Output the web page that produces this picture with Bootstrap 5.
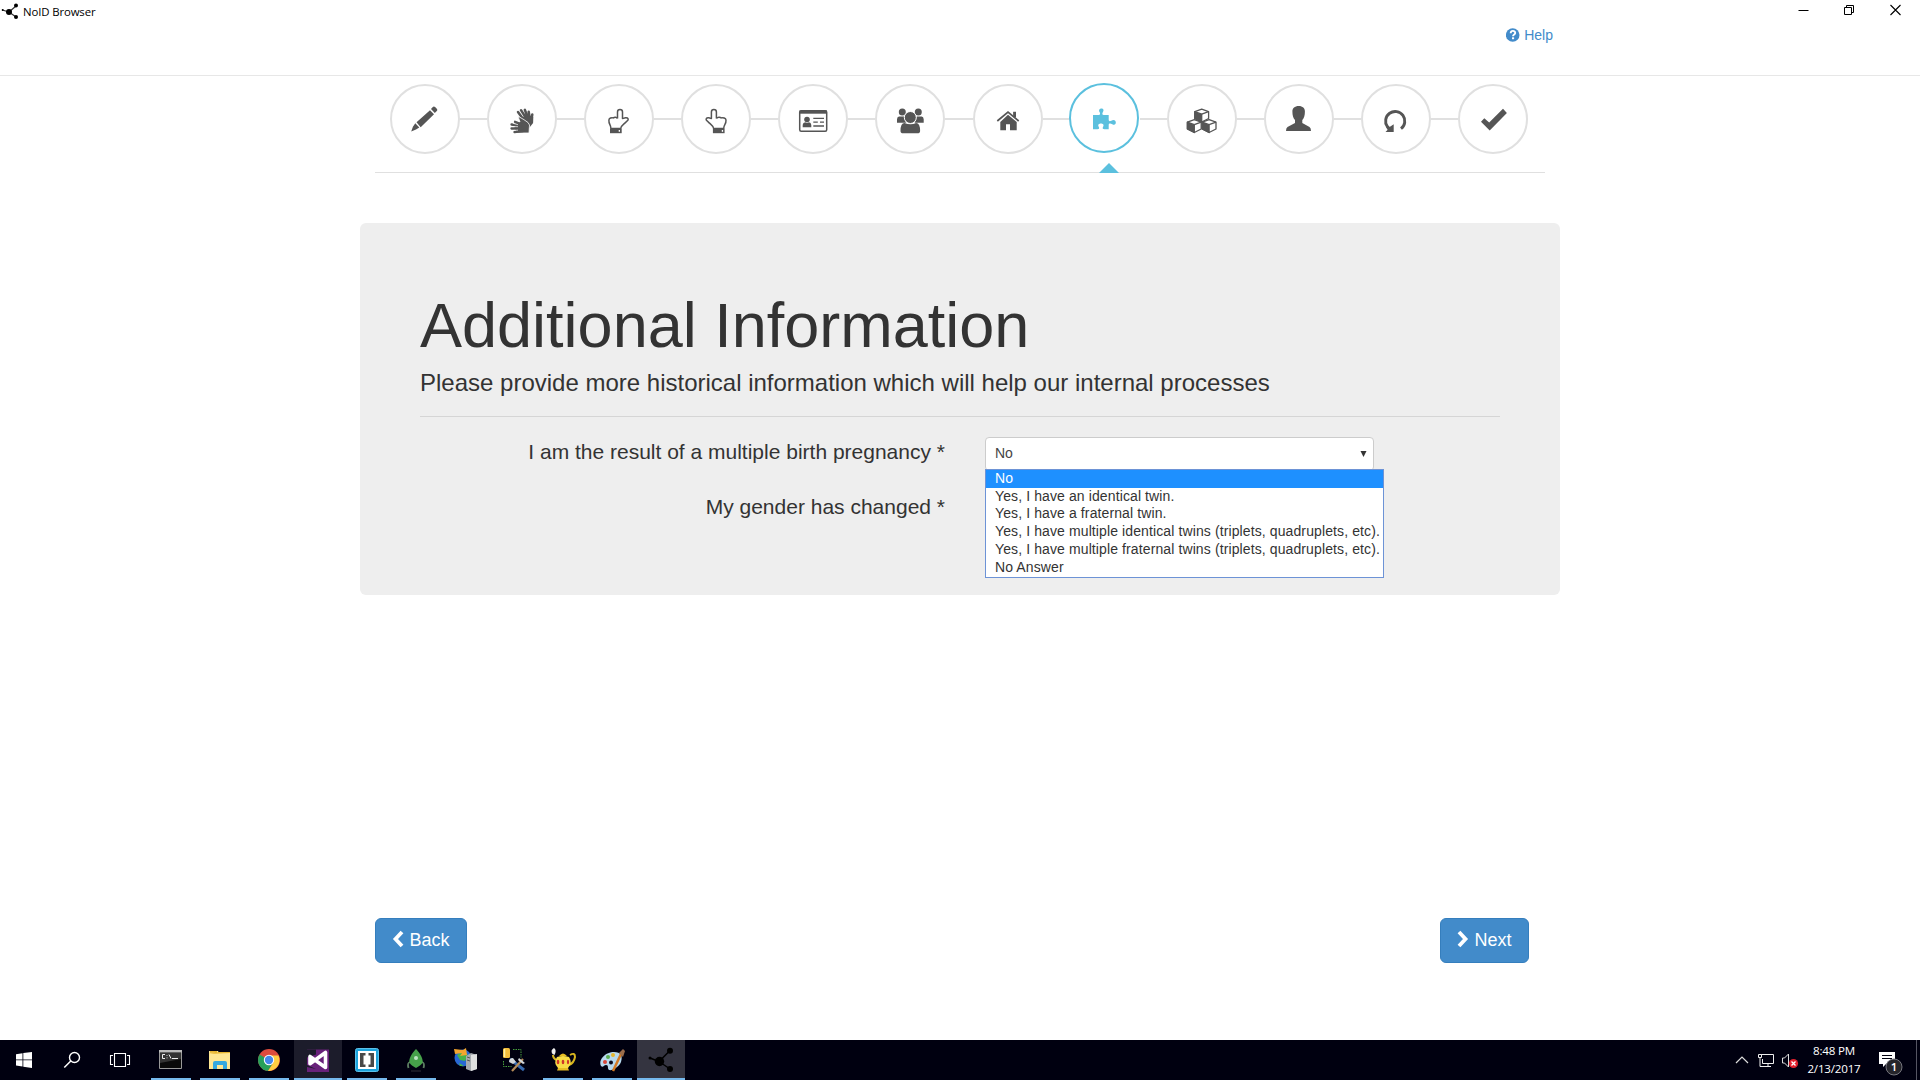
<!DOCTYPE html>
<html lang="en">
<head>
<meta charset="utf-8">
<title>NoID Browser</title>
<link href="https://cdn.jsdelivr.net/npm/bootstrap@5.3.0/dist/css/bootstrap.min.css" rel="stylesheet">
<style>
body{font-family:"Liberation Sans",Arial,sans-serif;font-size:14px;line-height:1.42857;color:#333;background:#fff;overflow:hidden}
svg{display:block;flex:none}
.app-window{height:1040px}
.top-strip{height:76px;border-bottom:1px solid #e7e7e7}
.win-title{font:11.4px/16px "Open Sans","Noto Sans",sans-serif;letter-spacing:-.13px;color:#000;padding:3px 0 0 1px;gap:4px;height:24px}
.win-title span{padding-top:1px}
.win-controls{gap:35px;padding:2px 19px 0 0}
.help-row{padding:2px 367px 0 0}
.help-link{color:#428bca;gap:4px}
.help-link svg{margin-top:-1px}
.wizard{width:1170px;height:97px;padding:8px 17px 0 15px;border-bottom:1px solid #e0e0e0}
.step-ring{width:70px;height:70px;border:2px solid #e0e0e0;border-radius:50%;color:#555;flex:none}
.step-ring.current{border-color:#5bc0de;color:#5bc0de;margin:-1px 1px 1px -1px}
.step-ring svg{fill:currentColor}
.joint{height:2px;background:#e0e0e0;margin-top:34px}
.pointer-tip{left:724px;bottom:-1px;border:10px solid transparent;border-top:0;border-bottom-color:#5bc0de}
.panel-box{width:1200px;height:372px;margin-top:50px;padding:68px 60px 0;background:#eee;border-radius:6px}
.panel-box h1{font-size:63px;line-height:1.1;font-weight:500;margin:0 0 10px;color:#333}
.panel-box h2{font-size:24px;line-height:1.1;font-weight:400;margin:0}
.rule{height:1px;background:#d5d5d5;margin:19px 0 20px}
.q-label{width:525px;font-size:21px;line-height:29px;font-weight:400}
.q-row{height:55px;gap:40px}
.pick{width:389px;height:34px;padding:0 6px 0 9px;background:#fff;border:1px solid #ccc;border-radius:4px;color:#444}
.pick-list{top:32px;left:0;width:399px;height:109px;border:1px solid #6d93d6;background:#fff;color:#333;white-space:nowrap;letter-spacing:.11px;z-index:3}
.pick-list div{height:17.8px;line-height:16px;padding-left:9px}
.pick-list .chosen{background:#1e90ff;color:#fff;height:18px;line-height:16px}
.nav-row{width:1170px;padding:0 16px 77px 0}
.btn-step{--bs-btn-bg:#428bca;--bs-btn-border-color:#357ebd;--bs-btn-color:#fff;height:45px;font-size:18px;line-height:24px;border-radius:6px;padding:9px 0 0;gap:5px}
.taskbar{height:40px;background:#000010;color:#fff;font-family:"Open Sans","Noto Sans",sans-serif}
.task{width:48px;height:40px;margin-right:1px}
.sys{margin-right:0}
.running{background:linear-gradient(#76b9ed,#76b9ed) center bottom/40px 2px no-repeat}
.lit{background:linear-gradient(#76b9ed,#76b9ed) center bottom/48px 2px no-repeat,#1c1c2b}
.lit2{background:linear-gradient(#76b9ed,#76b9ed) center bottom/48px 2px no-repeat,#343440}
.clock{font-size:11.6px;line-height:18px;width:54px;letter-spacing:-.2px;padding-top:2px;white-space:nowrap}
.edge{width:4px;border-left:1px solid #555563;height:40px}
</style>
<script src="https://cdn.jsdelivr.net/npm/bootstrap@5.3.0/dist/js/bootstrap.bundle.min.js"></script>
</head>
<body>
<div class="app-window d-flex flex-column align-items-center">
  <header class="top-strip w-100">
    <div class="d-flex justify-content-between">
      <div class="win-title d-flex">
        <svg width="18" height="17" viewBox="0 0 18 17"><path d="M1.500 7 8 9l7-6M8 9l7 5" stroke="#333" stroke-width="1.200" fill="none"/><circle cx="8" cy="9" r="3"/><circle cx="15" cy="2.500" r="2"/><circle cx="15" cy="14" r="2"/><circle cx="1.700" cy="7" r="1"/></svg>
        <span>NoID Browser</span>
      </div>
      <div class="win-controls d-flex">
        <svg width="11" height="18"><path d="M.5 8.500h10" stroke="#000"/></svg>
        <svg width="11" height="18"><path d="M.5 5.500h7v7h-7zM2.500 5.500v-2h7v7h-2" fill="none" stroke="#000"/></svg>
        <svg width="11" height="18"><path d="M.5 3l10 10M10.500 3l-10 10" stroke="#000" stroke-width="1.100"/></svg>
      </div>
    </div>
    <div class="help-row d-flex justify-content-end">
      <a href="#" class="help-link d-flex align-items-start text-decoration-none">
        <svg width="14" height="20" viewBox="0 0 14 20"><circle cx="6.700" cy="10" r="6.800" fill="#428bca"/><path d="M4.700 8.300c0-3.300 4.600-3 4.500-.3 0 1.600-2.200 1.400-2.200 3.300" fill="none" stroke="#fff" stroke-width="1.900"/><path d="M6 12.300h2.100v1.900H6z" fill="#fff"/></svg>
        <span>Help</span>
      </a>
    </div>
  </header>

  <nav class="wizard d-flex align-items-start position-relative">
    <div class="step-ring"><svg width="66" height="66" viewBox="2 2 66 66"><path d="M26.500 38.300 40 26.300l4 4L30.700 43.300zM25.300 39.300l4 4.200-3.300 2-4.800 2 1.700-4.700zM41 25l1.600-1.800q1.200-1.400 2.500-.2l1.700 1.800q1.200 1.200 0 2.300L44.800 29z"/></svg></div>
    <div class="joint flex-fill"></div>
    <div class="step-ring"><svg width="66" height="66" viewBox="2 2 66 66"><g stroke="currentColor" stroke-width="2.500" stroke-linecap="round" fill="none"><path d="M36 35l-5-7M39 34l-5-7.800M41 34l-3.200-8.200M43 36l-1.300-8.200M44 38l1.300-7.500"/></g><path d="M34 33l9-1 3.300 1-.2 6-4 5-6-4z"/><path d="M31 32.200l6 3.500 4 2.800 1.500 2.500-.5 8H30l-3-5 1-5 5-1z" stroke="#fff" stroke-width=".8"/><path d="M34 40l-6-2.200M34 42l-9.500-1.500M35 44.500l-10.500 0M36 47l-8.500 1" stroke="currentColor" stroke-width="2.300" stroke-linecap="round"/><path d="M25 42.500l6 .2M26 46.500l5-.4M26 39.300l5 1.400" stroke="#fff" stroke-width=".7"/></svg></div>
    <div class="joint flex-fill"></div>
    <div class="step-ring"><svg width="66" height="66" viewBox="2 2 66 66"><path d="M33.500 34.500V28a2.500 2.500 0 0 1 5 0v6.600l3-.8c2.500-.4 3.600 1.800 1.800 3l-2.400 2.300c-1.600 1.800-4.200 2.500-4.200 5.300H26.900c0-3.800-2.300-4-2-8.400.2-2 2.600-2.700 4.500-2.100 1-.8 3-.9 4.100 .6" fill="none" stroke="currentColor" stroke-width="1.500" stroke-linejoin="round"/><path d="M26 44.600h11.700v4.600H26z"/><path d="M34.700 46h1.300v1.800h-1.300z" fill="#fff"/></svg></div>
    <div class="joint flex-fill"></div>
    <div class="step-ring"><svg width="66" height="66" viewBox="2 2 66 66"><g transform="translate(69.600)scale(-1 1)"><path d="M34.200 34.500V28a2.500 2.500 0 0 1 5 0v6.600l2.600-.8c2.500-.4 3.600 1.800 1.800 3l-2.400 2.300c-1.600 1.800-4.200 2.500-4.200 5.300H26.900c0-3.800-2.600-4-2.300-8.400.2-2 2.900-2.700 4.800-2.100 1-.8 3.500-.9 4.800 .6" fill="none" stroke="currentColor" stroke-width="1.500" stroke-linejoin="round"/><path d="M26 44.600h11.700v4.600H26z"/><path d="M27.500 46h1.300v1.800h-1.300z" fill="#fff"/></g></svg></div>
    <div class="joint flex-fill"></div>
    <div class="step-ring"><svg width="66" height="66" viewBox="2 2 66 66"><rect x="21.700" y="26.700" width="27" height="20.600" rx="1.500" fill="none" stroke="currentColor" stroke-width="1.500"/><path d="M21.500 26.500h27.500v3.200H21.500z"/><circle cx="29" cy="35.500" r="2.800"/><path d="M24.700 43.200v-2.500q.3-2.500 2.500-2.500 1.800 1 3.700 0 2.200.2 2.400 2.700v2.300z"/><path d="M35.300 34.300H46M35.300 38.200h4.500M42 38.200h4M35.300 42H46" stroke="currentColor" stroke-width="1.300"/></svg></div>
    <div class="joint flex-fill"></div>
    <div class="step-ring"><svg width="66" height="66" viewBox="2 2 66 66"><circle cx="27.300" cy="28" r="3.500"/><circle cx="43.300" cy="28" r="3.500"/><path d="M22 38.800v-3.500q.2-2.800 2-2.800h5l2 6.300zM48.700 38.800v-3.500q-.2-2.800-2-2.800h-5l-2 6.300z"/><circle cx="35.300" cy="33.500" r="6" stroke="#fff"/><path d="M29.500 39q-4 0-4 8 0 2.300 2.700 2.300h14.200q2.700 0 2.700-2.300 0-8-4-8-5.500 2.500-11.600 0z"/></svg></div>
    <div class="joint flex-fill"></div>
    <div class="step-ring"><svg width="66" height="66" viewBox="2 2 66 66"><path d="M24.300 37 35 28.200 45.700 37M41.500 28v5" fill="none" stroke="currentColor" stroke-width="1.700"/><path d="M40.200 27.800h2.800v6l-2.800-2.300zM35 30.800l8.700 7.200v8.200H37v-6h-4v6h-5.700V38z"/></svg></div>
    <div class="joint flex-fill"></div>
    <div class="step-ring current"><svg width="66" height="66" viewBox="2 2 66 66"><path d="M24 32h6c1 0 1.500-1.500.7-2.700-3-4.900 6.300-5.400 3.200-.3-1 1.700-.6 3 .8 3h5v4.500c0 2 1.300 2 2.600 1.200 5.700-3.200 6 6.300 1 3.600-1.800-1-3.600-1-3.600.7v4.300h-4.200c-2 0-2.200-1-1.400-2.500 2.600-4.500-6.900-4.500-4.400 0 1 1.700.2 2.500-1.200 2.500H24z"/></svg></div>
    <div class="joint flex-fill"></div>
    <div class="step-ring"><svg width="66" height="66" viewBox="2 2 66 66"><g stroke="currentColor" stroke-width="1.300" stroke-linejoin="round"><g id="cube"><path d="M27.800 27.700l6.900-2.500 6.900 2.500v6.800l-6.900 3.500-6.900-3.500z" fill="#fff"/><path d="M27.800 27.700l6.900 2.500V38l-6.900-3.500z"/><path d="M34.700 30.200l6.900-2.500" fill="none"/></g><use href="#cube" x="-7.400" y="10.500"/><use href="#cube" x="7.400" y="10.500"/></g></svg></div>
    <div class="joint flex-fill"></div>
    <div class="step-ring"><svg width="66" height="66" viewBox="2 2 66 66"><path d="M34.700 22c4 0 6.200 2.300 6.200 5.500 0 4-.8 6.500-2.600 8.500v3l7.200 4q1.500 1 1.500 4H22q0-3 1.500-4l7.500-4v-3c-1.800-2-2.600-4.500-2.600-8.500 0-3.200 2.300-5.500 6.300-5.500z"/></svg></div>
    <div class="joint flex-fill"></div>
    <div class="step-ring"><svg width="66" height="66" viewBox="2 2 66 66"><path d="M40 44.700A9.600 9.600 0 1 0 26.300 42.500l2 2.500" fill="none" stroke="currentColor" stroke-width="2.900"/><path d="M32.700 40.300V48H24.500l2.200-2.200-1.700-2.500 4-.5z"/></svg></div>
    <div class="joint flex-fill"></div>
    <div class="step-ring"><svg width="66" height="66" viewBox="2 2 66 66"><path d="M23 37.700l3.300-3.500 4.900 4.300L45 24.800l3.900 4.100L31.700 46.500z"/></svg></div>
    <span class="pointer-tip position-absolute"></span>
  </nav>

  <main class="panel-box">
    <h1>Additional Information</h1>
    <h2>Please provide more historical information which will help our internal processes</h2>
    <div class="rule"></div>
    <div class="q-row d-flex">
      <label class="q-label text-end">I am the result of a multiple birth pregnancy *</label>
      <div class="position-relative">
        <div class="pick d-flex align-items-center justify-content-between"><span>No</span><svg width="7" height="6"><path d="M.5 0h6L3.500 6z" fill="#333"/></svg></div>
        <div class="pick-list position-absolute">
          <div class="chosen">No</div>
          <div>Yes, I have an identical twin.</div>
          <div>Yes, I have a fraternal twin.</div>
          <div>Yes, I have multiple identical twins (triplets, quadruplets, etc).</div>
          <div>Yes, I have multiple fraternal twins (triplets, quadruplets, etc).</div>
          <div>No Answer</div>
        </div>
      </div>
    </div>
    <div class="q-row d-flex"><label class="q-label text-end">My gender has changed *</label></div>
  </main>

  <div class="nav-row d-flex justify-content-between mt-auto">
    <button class="btn btn-step d-flex justify-content-center" style="width:92px"><svg width="12" height="24"><path d="M10 5 3.500 12l6.500 7" transform="translate(0 -1)" fill="none" stroke="#fff" stroke-width="3.800"/></svg><span>Back</span></button>
    <button class="btn btn-step d-flex justify-content-center" style="width:89px"><svg width="12" height="24"><path d="M2 5l6.500 7L2 19" transform="translate(0 -1)" fill="none" stroke="#fff" stroke-width="3.800"/></svg><span>Next</span></button>
  </div>
</div>

<footer class="taskbar d-flex">
  <div class="task sys"><svg width="48" height="40"><path d="M16 14.200l6.500-1v6.300H16zM23.300 13.100 32 12v7.500h-8.700zM16 20.300h6.500v6.300l-6.500-1zM23.300 20.300H32V28l-8.700-1.300z" fill="#fff"/></svg></div>
  <div class="task sys"><svg width="48" height="40"><circle cx="26.500" cy="17.500" r="5" fill="none" stroke="#fff" stroke-width="1.400"/><path d="M22.800 21 16.300 27.500" stroke="#fff" stroke-width="1.500"/></svg></div>
  <div class="task" style="margin-right:3px"><svg width="48" height="40"><path d="M18.500 13.500h11v13h-11zM17 15.500h-2.500v9H17M31 15.500h2.500v9H31" fill="none" stroke="#fff" stroke-width="1.100"/></svg></div>
  <div class="task running"><svg width="48" height="40"><path d="M12.500 10.500h22v18h-22z" fill="#0a0a0a" stroke="#999"/><path d="M12 10h23v2.500H12z" fill="#bbb"/><path d="M13 13h21v6l-21 4z" fill="#333"/><path d="M18 14.500h-2.500v4H18M20 15v.8M20 17.500v.8M22 14.500l2 4M25 18.500h6" stroke="#eee" fill="none"/></svg></div>
  <div class="task running"><svg width="48" height="40"><path d="M13 11h9l1 2h11v16H13z" fill="#ffe793"/><path d="M14 11h7v1.800h-7zM13 14l21-1v-1H23" fill="#e7b530"/><path d="M17 29v-6q0-2 2-2h10q2 0 2 2v6h-4v-4h-6v4z" fill="#35a9e0"/></svg></div>
  <div class="task running"><svg width="48" height="40"><circle cx="24" cy="20" r="11" fill="#dd4b3e"/><path d="M14.500 14.500A11 11 0 0 0 23 31l5-8-4-3z" fill="#27a05a"/><path d="M23 31a11 11 0 0 0 10.500-15.500H24l4.500 7z" fill="#ffcd42"/><circle cx="24" cy="20" r="5.200" fill="#fff"/><circle cx="24" cy="20" r="4.200" fill="#4587ec"/></svg></div>
  <div class="task lit"><svg width="48" height="40"><path d="M13 9.500h22V32H13z" fill="#68217a"/><path d="M13 9.500h9v5l-9 3zM13 25l9 4-9-2z" fill="#1c1c2b"/><path d="M16 16.500v7.200L31.500 12.500v15z" fill="none" stroke="#fff" stroke-width="3.600" stroke-linejoin="round"/></svg></div>
  <div class="task running"><svg width="48" height="40"><rect x="12.500" y="8.500" width="23" height="23" rx="2" fill="#1ca3dc" stroke="#5cc0ea"/><path d="M15 11h18v18H15z" fill="#fff"/><path d="M17 13h14v14H17z" fill="#484848"/><path d="M20.500 15.500h7v9h-7z" fill="#fff"/><path d="M22.500 13h3v14h-3z" fill="#fff"/></svg></div>
  <div class="task running"><svg width="48" height="40"><path d="M18 22q-3 1-1.500 6M30 22q3 1 1.500 6" fill="none" stroke="#5b7c62" stroke-width="1.800"/><path d="M24 9c3 3 7 8.500 6.700 13-1 3-4 4.500-6.700 6-2.700-1.500-5.700-3-6.700-6C17 17.500 21 12 24 9z" fill="#46a14a"/><circle cx="24" cy="18" r="2" fill="#bde5c4"/><path d="M19 31h10" stroke="#303038"/></svg></div>
  <div class="task"><svg width="48" height="40"><circle cx="22" cy="18" r="8.500" fill="#2868d4"/><path d="M16 15l6-4 5 4-3 6-5-1zM18 23l5 3-4 0z" fill="#48b349"/><path d="M13 9l9 1 3-2 1 7-7 1 2-3-7 1z" fill="#f4a62d"/><path d="M25 16l5-3 6 2v14l-6 2-5-2z" fill="#a6abb0"/><path d="M30 15l6-1v15l-6 2z" fill="#dedfe0"/><path d="M26 17l3 1M26 20l3 1" stroke="#555"/></svg></div>
  <div class="task"><svg width="48" height="40"><rect x="13" y="8" width="7" height="10" rx="1.500" fill="#f4be3c"/><path d="M14.500 9v8" stroke="#fff0a2" stroke-width="1.500"/><path d="M23 9.500h8v8M13.500 21v5.500h8" fill="none" stroke="#48a03d" stroke-dasharray="1.500 1"/><path d="M20 19l14 11" stroke="#3769ae" stroke-width="3"/><path d="M33 19 22 31" stroke="#b58b58" stroke-width="2.200"/><path d="M19 22q0-4 4-4l3 4-3 2zM29 18l6 5-2 1-5-4z" fill="#d2d6da"/></svg></div>
  <div class="task running"><svg width="48" height="40"><path d="M17 20q-3-2-3-5M31 15q5-3 5 2-1 6-6 8" fill="none" stroke="#d8b51f" stroke-width="2"/><path d="M18 17q6-2 12 0 4 6-1 11H19q-5-5-1-11z" fill="#f8dc45"/><path d="M19 28h10l1 2.500H18zM20 16q4-5 8 0z" fill="#e6bc23"/><ellipse cx="19" cy="22" rx="1.300" ry="2.300" fill="#cf3629"/><ellipse cx="24" cy="22" rx="1.300" ry="2.300" fill="#cf3629"/><ellipse cx="29" cy="22" rx="1.100" ry="2.300" fill="#cf3629"/><path d="M13.500 14q-2.500-4 1.500-6 3 2 .5 7z" fill="#eee"/></svg></div>
  <div class="task running"><svg width="48" height="40"><path d="M13 26c-3-7 5-14 13-14 7 0 9 4 7 10-2 5-9 9-12 8-2-2 0-5-3-5-2 0-3 3-5 1z" fill="#b7d9ee"/><circle cx="17" cy="22" r="2" fill="#d94739"/><circle cx="20" cy="17" r="2" fill="#5aae50"/><circle cx="25" cy="15" r="2" fill="#e6b62e"/><circle cx="23" cy="22.500" r="2" fill="#08081a"/><path d="M25 31 33 14" stroke="#d37a24" stroke-width="2.500"/><path d="M31 13l4-4 2 2-2 6z" fill="#9b6d4b"/></svg></div>
  <div class="task lit2"><svg width="48" height="40"><path d="M13 18l9 3.500 11-11M22 21.500 33 29" fill="none" stroke="#000" stroke-width="1.500"/><circle cx="22.500" cy="21.500" r="4.700"/><circle cx="33" cy="10.800" r="3"/><circle cx="33" cy="29" r="3"/><circle cx="13" cy="18" r="1.500"/></svg></div>
  <div class="d-flex ms-auto">
    <svg width="72" height="40"><path d="M5 23l6-6 6 6" fill="none" stroke="#ddd" stroke-width="1.200"/><path d="M30.500 15.500v-1h12v9H31.500V19M27.500 14.500h3v3h-3zM29 18v8.500h9M37 24v2.500M33 26.500h7" fill="none" stroke="#eee"/><path d="M51.500 18h2l4-4v13l-4-4h-2z" fill="none" stroke="#ddd"/><circle cx="62.500" cy="23.500" r="4.600" fill="#e0202d"/><path d="M60.500 21.500l4 4M64.500 21.500l-4 4" stroke="#fff" stroke-width="1.300"/></svg>
    <div class="clock text-center ms-1"><div>8:48 PM</div><div>2/13/2017</div></div>
    <svg width="51" height="40" class="ms-1"><path d="M14 12h16v12h-9l-3 3v-3h-4z" fill="#fff"/><path d="M17 15.500h10M17 18.500h10" stroke="#000010"/><circle cx="29" cy="27" r="8" fill="#25252b" stroke="#77777f"/><text x="29" y="31" text-anchor="middle" font-size="11.500" font-weight="600" fill="#fff">1</text></svg>
    <div class="edge"></div>
  </div>
</footer>
</body>
</html>
